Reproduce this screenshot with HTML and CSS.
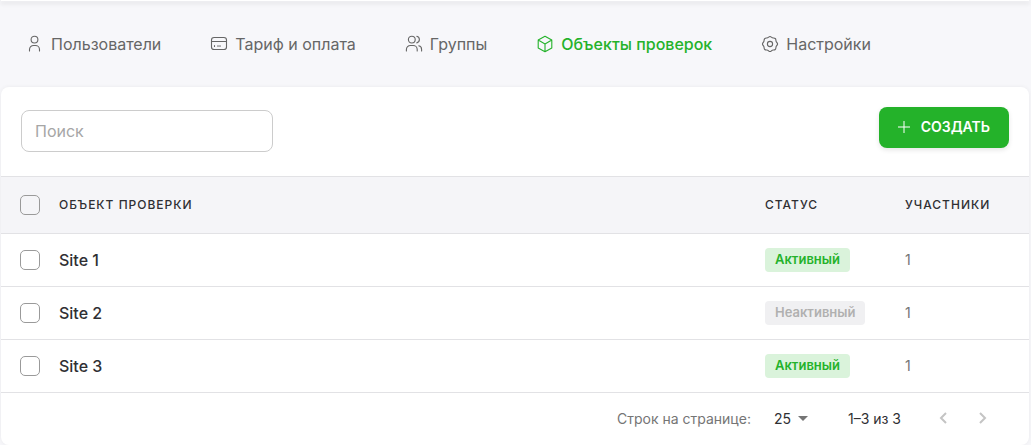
FILE: index.html
```html
<!DOCTYPE html>
<html lang="ru">
<head>
    <meta charset="UTF-8">
    <meta name="viewport" content="width=device-width, initial-scale=1.0">
    <title>Объекты проверок</title>
    <link rel="stylesheet" href="styles.css">
</head>
<body>
    <header class="top-card"></header>

    <nav class="tabs">
        <a class="tab" href="#users">
            <svg class="tab-icon" viewBox="0 0 18 18"><circle cx="8.500" cy="4.600" r="3.400"/><path d="M3.500 16v-1.500a4 4 0 0 1 4-4h2a4 4 0 0 1 4 4V16"/></svg>
            Пользователи
        </a>
        <a class="tab" href="#billing">
            <svg class="tab-icon" viewBox="0 0 18 18"><rect x="1.500" y="2.500" width="15" height="12" rx="2.600"/><path d="M1.500 6.500h15M4.500 10.500v1M7.500 11h1M9.500 11h1"/></svg>
            Тариф и оплата
        </a>
        <a class="tab" href="#groups">
            <svg class="tab-icon" viewBox="0 0 18 18"><circle cx="6.800" cy="4.600" r="3.400"/><path d="M1.400 16v-1.500a4 4 0 0 1 4-4h2.800a4 4 0 0 1 4 4V16M11.800 1.300a3.400 3.400 0 0 1 0 6.600M13.800 10.800a3.600 3.600 0 0 1 2.800 3.600V16"/></svg>
            Группы
        </a>
        <a class="tab active" href="#objects">
            <svg class="tab-icon" viewBox="0 0 18 18"><path d="M9 1.300l6.800 3.800v7.800L9 16.700l-6.800-3.800V5.100zM2.200 5.100L9 9l6.800-3.900M9 9v7.700"/></svg>
            Объекты проверок
        </a>
        <a class="tab" href="#settings">
            <svg class="tab-icon" viewBox="0 0 18 18"><path d="M7.600 2.200Q9 .700 10.400 2.200Q11.300 3.100 12.500 3Q14.800 2.900 14.900 5.200Q14.900 6.600 15.800 7.500Q17.300 9 15.800 10.500Q14.900 11.400 14.900 12.800Q14.800 15.100 12.500 15Q11.300 14.900 10.400 15.800Q9 17.300 7.600 15.800Q6.700 14.900 5.500 15Q3.200 15.100 3.100 12.800Q3.100 11.400 2.200 10.500Q.700 9 2.200 7.500Q3.100 6.600 3.100 5.200Q3.200 2.900 5.500 3Q6.700 3.100 7.600 2.200Z"/><circle cx="9" cy="9" r="2.600"/></svg>
            Настройки
        </a>
    </nav>

    <main class="card">
        <div class="toolbar">
            <input class="search" type="text" placeholder="Поиск" aria-label="Поиск">
            <button class="btn-create" type="button">
                <svg class="plus" viewBox="0 0 12 12"><path d="M6 0v12M0 6h12"/></svg>
                Создать
            </button>
        </div>

        <table class="objects">
            <thead>
                <tr>
                    <th class="col-check"><input class="check" type="checkbox" aria-label="Выбрать все"></th>
                    <th>Объект проверки</th>
                    <th class="col-status">Статус</th>
                    <th class="col-members">Участники</th>
                </tr>
            </thead>
            <tbody>
                <tr>
                    <td class="col-check"><input class="check" type="checkbox" id="site1"></td>
                    <td><label class="name" for="site1">Site 1</label></td>
                    <td><span class="badge badge-active">Активный</span></td>
                    <td class="members">1</td>
                </tr>
                <tr>
                    <td class="col-check"><input class="check" type="checkbox" id="site2"></td>
                    <td><label class="name" for="site2">Site 2</label></td>
                    <td><span class="badge">Неактивный</span></td>
                    <td class="members">1</td>
                </tr>
                <tr>
                    <td class="col-check"><input class="check" type="checkbox" id="site3"></td>
                    <td><label class="name" for="site3">Site 3</label></td>
                    <td><span class="badge badge-active">Активный</span></td>
                    <td class="members">1</td>
                </tr>
            </tbody>
        </table>

        <div class="pagination">
            <label class="rows-label" for="rows">Строк на странице:</label>
            <div class="rows">
                <select class="rows-select" id="rows">
                    <option>25</option>
                    <option>50</option>
                </select>
                <svg class="arrow" viewBox="0 0 10 5"><path d="M0 0h10L5 5z"/></svg>
            </div>
            <span class="range">1–3 из 3</span>
            <button class="page-btn" type="button" aria-label="Назад"><svg viewBox="0 0 8 12"><path d="M7 1L2 6l5 5"/></svg></button>
            <button class="page-btn" type="button" aria-label="Вперёд"><svg viewBox="0 0 8 12"><path d="M1 1l5 5-5 5"/></svg></button>
        </div>
    </main>
</body>
</html>
```

FILE: styles.css
```css
* {
    box-sizing: border-box;
}
body {
    margin: 0;
    padding: 0 2px 0 1px;
    background-color: #f7f7fa;
    color: #2f2f33;
    font-family: Inter, "Liberation Sans", sans-serif;
    font-size: 14px;
}
button, input, select {
    font-family: inherit;
}
.top-card {
    height: 1px;
    background-color: #fff;
    box-shadow: 0 2px 4px 1px rgba(0, 0, 0, 0.08);
}

/* Tabs */
.tabs {
    display: flex;
    gap: 49px;
    height: 86px;
    padding: 0 25px;
    align-items: center;
}
.tab {
    display: flex;
    align-items: center;
    gap: 7px;
    color: #666;
    font-size: 16px;
    line-height: 24px;
    text-decoration: none;
    white-space: nowrap;
}
.tab.active {
    color: #24b22a;
    font-weight: 500;
}
.tab-icon {
    width: 18px;
    height: 18px;
    fill: none;
    stroke: currentColor;
    stroke-width: 1.1;
    stroke-linejoin: round;
    stroke-linecap: round;
}

/* Card */
.card {
    background-color: #fff;
    border-radius: 8px;
    box-shadow: 0 0 4px rgba(0, 0, 0, 0.06);
}
.toolbar {
    display: flex;
    justify-content: space-between;
    align-items: flex-start;
    min-height: 89px;
    padding: 20px 20px 24px;
}
.search {
    align-self: flex-end;
    width: 252px;
    height: 42px;
    padding: 0 13px;
    border: 1px solid #ccc;
    border-radius: 8px;
    background-color: #fff;
    font-size: 16px;
}
.search::placeholder {
    color: #a6a6a6;
}
.btn-create {
    display: flex;
    align-items: center;
    gap: 11px;
    height: 41px;
    padding: 0 19px 2px;
    border: none;
    border-radius: 8px;
    background-color: #24b22a;
    box-shadow: 0 2px 5px rgba(0, 0, 0, 0.1);
    color: #fff;
    font-size: 14px;
    font-weight: 600;
    text-transform: uppercase;
    cursor: pointer;
}
.plus {
    width: 12px;
    height: 12px;
    stroke: currentColor;
    stroke-width: 1;
}

/* Table */
.objects {
    width: 100%;
    border-collapse: separate;
    border-spacing: 0;
    table-layout: fixed;
}
.objects th, .objects td {
    height: 53px;
    padding: 0;
    border-bottom: 1px solid #e2e2e5;
    text-align: left;
    vertical-align: middle;
}
.objects th {
    height: 58px;
    padding-bottom: 2px;
    border-top: 1px solid #e2e2e5;
    background-color: #f5f5f8;
    font-size: 12px;
    font-weight: 500;
    letter-spacing: 1px;
    text-transform: uppercase;
}
.objects .col-check {
    width: 58px;
    padding: 0 0 0 19px;
}
.col-status {
    width: 140px;
}
.col-members {
    width: 124px;
}
.check {
    display: block;
    appearance: none;
    width: 20px;
    height: 20px;
    margin: 0;
    border: 1px solid #9a9a9a;
    border-radius: 5px;
    background-color: #fff;
}
.check:checked {
    border-color: #24b22a;
    background-color: #24b22a;
}
.objects thead .check {
    background-color: transparent;
}
.name {
    font-size: 16px;
    font-weight: 500;
}
.badge {
    display: inline-block;
    padding: 0 10px 2px;
    border-radius: 4px;
    background-color: #f0f0f2;
    color: #b0b0b0;
    font-size: 13px;
    font-weight: 600;
    line-height: 22px;
}
.badge-active {
    background-color: #daf3db;
    color: #24b22a;
}
.objects .members {
    padding-bottom: 2px;
    color: #757575;
}

/* Pagination */
.pagination {
    display: flex;
    align-items: center;
    justify-content: flex-end;
    height: 52px;
    padding: 0 26px 2px 0;
}
.rows-label {
    color: #757575;
}
.rows {
    display: flex;
    align-items: center;
    margin: 0 40px 0 23px;
}
.rows-select {
    appearance: none;
    width: 35px;
    margin-right: -11px;
    padding: 0;
    border: none;
    background: transparent;
    color: inherit;
    font-size: 14px;
}
.arrow {
    width: 10px;
    height: 5px;
    fill: #757575;
    pointer-events: none;
}
.range {
    margin-right: 22px;
}
.page-btn {
    display: flex;
    align-items: center;
    justify-content: center;
    width: 40px;
    height: 40px;
    padding: 0;
    border: none;
    background: transparent;
}
.page-btn svg {
    width: 8px;
    height: 12px;
    fill: none;
    stroke: #c4c4c4;
    stroke-width: 2;
}
```
